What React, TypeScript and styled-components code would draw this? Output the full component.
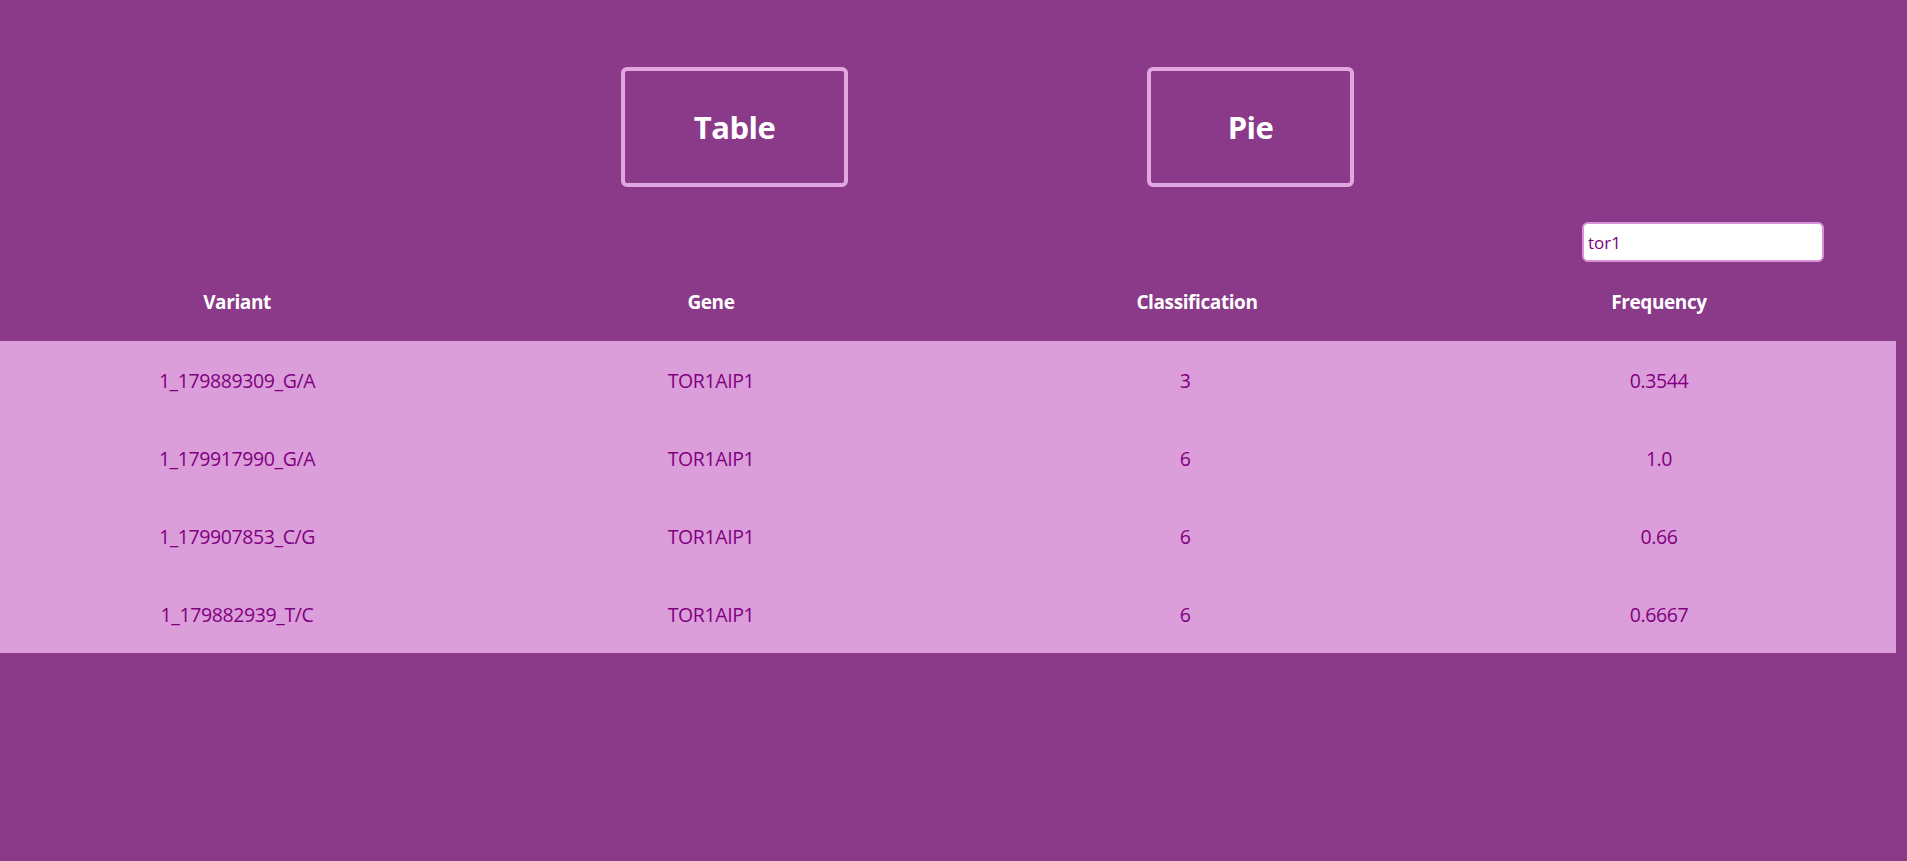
import styled, { createGlobalStyle } from "styled-components";

const GlobalStyle = createGlobalStyle`
  html, body {
    margin: 0;
    padding: 0;
    background: #8a3a88;
    font-family: "Open Sans", "Noto Sans", sans-serif;
  }
  #root {
    min-height: 100vh;
  }
`;

const rows = [
  { variant: "1_179889309_G/A", gene: "TOR1AIP1", classification: 3, frequency: "0.3544" },
  { variant: "1_179917990_G/A", gene: "TOR1AIP1", classification: 6, frequency: "1.0" },
  { variant: "1_179907853_C/G", gene: "TOR1AIP1", classification: 6, frequency: "0.66" },
  { variant: "1_179882939_T/C", gene: "TOR1AIP1", classification: 6, frequency: "0.6667" },
];

const Page = styled.div`
  min-height: 100vh;
  background: #8a3a88;
  padding-top: 67px;
  box-sizing: border-box;
`;

const Tabs = styled.div`
  display: flex;
  gap: 299px;
  padding-left: 621px;
`;

const TabButton = styled.button<{ $w: number }>`
  width: ${(p) => p.$w}px;
  height: 120px;
  box-sizing: border-box;
  background: transparent;
  border: 4px solid #e2a6e0;
  border-radius: 6px;
  color: #fff;
  font-family: "Open Sans", "Noto Sans", sans-serif;
  font-weight: 700;
  font-size: 31px;
  letter-spacing: -0.5px;
  cursor: pointer;
`;

const SearchBar = styled.div`
  display: flex;
  justify-content: flex-end;
  padding-right: 83px;
  margin-top: 35px;
`;

const SearchInput = styled.input`
  width: 242px;
  height: 40px;
  box-sizing: border-box;
  border: 2px solid #d893d6;
  border-radius: 6px;
  background: #fff;
  color: #800080;
  font-family: "Open Sans", "Noto Sans", sans-serif;
  font-size: 17px;
  padding: 0 4px;
  outline: none;
`;

const Table = styled.table`
  width: 1896px;
  border-collapse: collapse;
  table-layout: fixed;
  margin-top: 1px;
`;

const HeadCell = styled.th<{ $shift?: number }>`
  height: 78px;
  padding: 0 0 0 ${(p) => p.$shift ?? 0}px;
  color: #fff;
  font-size: 19px;
  font-weight: 700;
  letter-spacing: -0.4px;
  text-align: center;
`;

const BodyRow = styled.tr`
  background: #dc9eda;
`;

const Cell = styled.td`
  height: 78px;
  padding: 0;
  color: #800080;
  font-size: 19.5px;
  letter-spacing: -0.4px;
  text-align: center;
`;

export default function App() {
  return (
    <>
      <GlobalStyle />
      <Page>
        <Tabs>
          <TabButton $w={227}>Table</TabButton>
          <TabButton $w={207}>Pie</TabButton>
        </Tabs>
        <SearchBar>
          <SearchInput defaultValue="tor1" />
        </SearchBar>
        <Table>
          <thead>
            <tr>
              <HeadCell>Variant</HeadCell>
              <HeadCell>Gene</HeadCell>
              <HeadCell $shift={24}>Classification</HeadCell>
              <HeadCell>Frequency</HeadCell>
            </tr>
          </thead>
          <tbody>
            {rows.map((r) => (
              <BodyRow key={r.variant}>
                <Cell>{r.variant}</Cell>
                <Cell>{r.gene}</Cell>
                <Cell>{r.classification}</Cell>
                <Cell>{r.frequency}</Cell>
              </BodyRow>
            ))}
          </tbody>
        </Table>
      </Page>
    </>
  );
}
